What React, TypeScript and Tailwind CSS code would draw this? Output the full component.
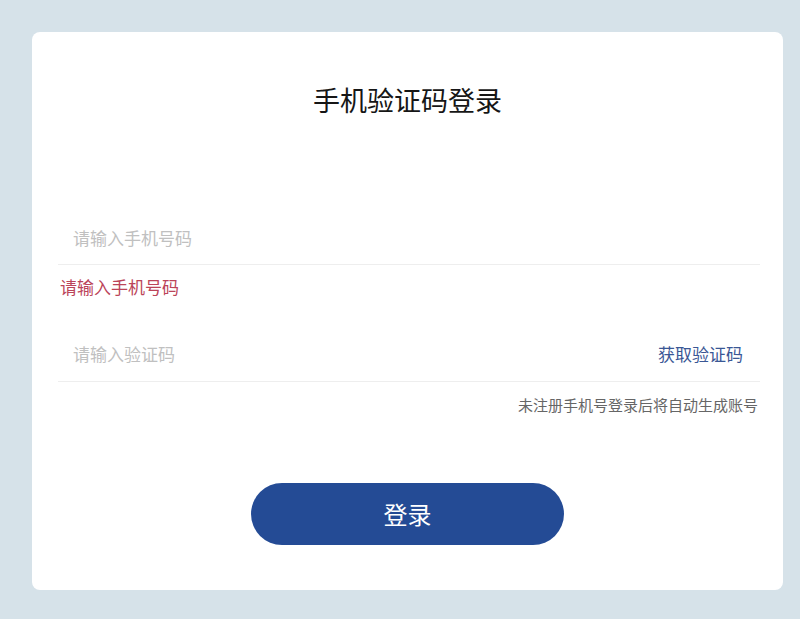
import { useState } from 'react';

const App = () => {
  const [phone, setPhone] = useState('');
  const [code, setCode] = useState('');

  return (
    <div
      className="min-h-screen w-full bg-[#d6e2e9] pt-[32px] pb-[29px]"
      style={{ fontFamily: '"Microsoft YaHei", "Noto Sans CJK SC", "Noto Sans", sans-serif' }}
    >
      <div className="ml-[32px] w-[751px] rounded-[8px] bg-white pt-[48px] pb-[45px]">
        {/* Title */}
        <h1 className="text-center text-[27px] leading-[40px] text-[#161616]">手机验证码登录</h1>

        <div className="ml-[26px] mr-[23px]">
          {/* Phone */}
          <div className="mt-[92px] flex h-[53px] items-center border-b border-[#eeeeee]">
            <input
              value={phone}
              onChange={(e) => setPhone(e.target.value)}
              placeholder="请输入手机号码"
              className="w-full bg-transparent pl-[15px] text-[17px] text-[#333] outline-none placeholder:text-[#c0c0c0]"
            />
          </div>
          <p className="mt-[10px] pl-[2px] text-[17px] leading-[24px] text-[#bb4459]">请输入手机号码</p>

          {/* Code */}
          <div className="mt-[28px] flex h-[55px] items-center border-b border-[#eeeeee]">
            <input
              value={code}
              onChange={(e) => setCode(e.target.value)}
              placeholder="请输入验证码"
              className="min-w-0 flex-1 bg-transparent pl-[15px] text-[17px] text-[#333] outline-none placeholder:text-[#c0c0c0]"
            />
            <button className="mr-[17px] text-[17px] text-[#3a5795]">获取验证码</button>
          </div>
          <p className="mt-[12px] pr-[2px] text-right text-[15px] leading-[22px] text-[#666]">
            未注册手机号登录后将自动生成账号
          </p>
        </div>

        {/* Submit */}
        <div className="mt-[67px] flex justify-center">
          <button className="h-[62px] w-[313px] rounded-full bg-[#244b95] text-[24px] text-white">登录</button>
        </div>
      </div>
    </div>
  );
};

export default App;
